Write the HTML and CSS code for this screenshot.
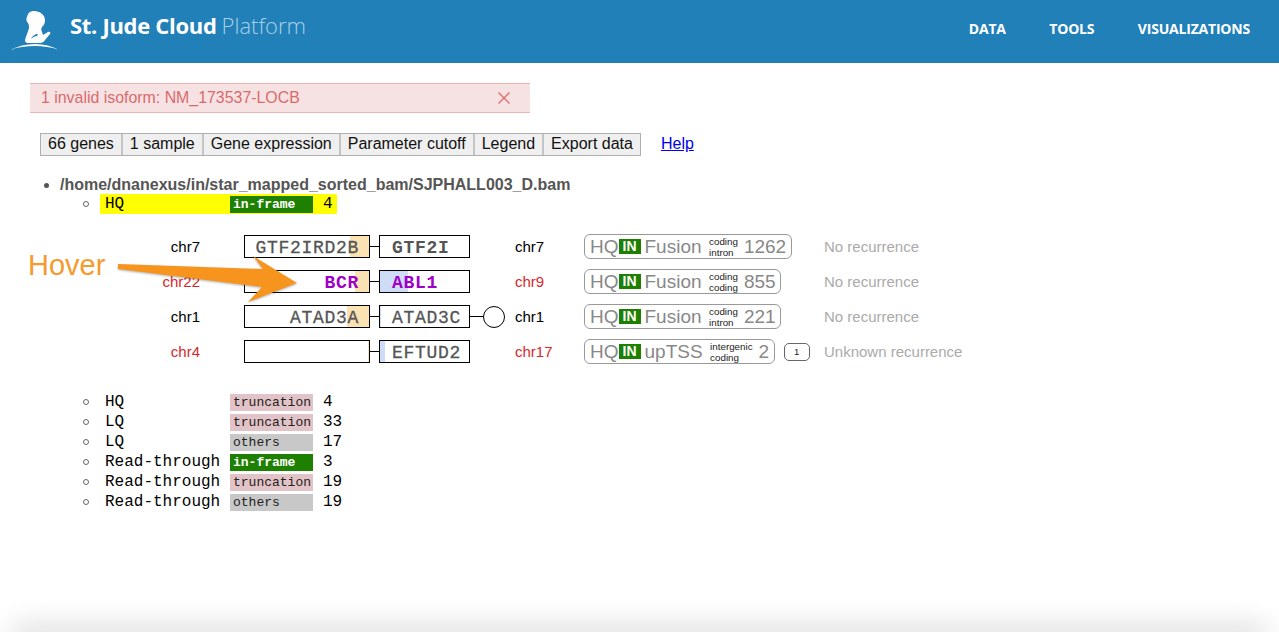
FILE: index.html
```html
<!DOCTYPE html>
<html>
<head>
<meta charset="utf-8">
<title>St. Jude Cloud Platform</title>
<link rel="stylesheet" href="styles.css">
</head>
<body>
	<header class="topbar">
		<div class="brand">
			<svg class="logo" width="60" height="50" viewBox="0 0 60 50">
				<path fill="#fff" d="M34 11c6 0 11 4 11 9 0 3-1 5-3 7-1 1-1 3 0 5l1 3 5-3c2-1 3 1 2 2l-5 6c-1 2-3 3-5 3H28c-2 0-3-1-3-3 1-4 3-8 4-12 0-2 0-3-1-5-2-2-2-4-1-6 1-4 3-6 7-6z"/>
				<path fill="#2280b9" d="M31 39c1-3 4-5 7-5l-1 2c-2 0-4 1-6 3z"/>
				<path fill="#fff" d="M10 50c8-4 16-6 25-6s17 2 24 6c-8-3-16-4-24-4-9 0-17 1-25 4z"/>
			</svg>
			<span class="brand-name">St. Jude Cloud</span>
			<span class="brand-sub">Platform</span>
		</div>
		<nav class="mainnav">
			<a>DATA</a>
			<a>TOOLS</a>
			<a>VISUALIZATIONS</a>
		</nav>
	</header>

	<main class="content">
		<div class="alert">
			<span>1 invalid isoform: NM_173537-LOCB</span>
			<svg class="alert-close" width="14" height="14" viewBox="0 0 14 14"><path d="M1.5 1.5l11 11M12.5 1.5l-11 11"/></svg>
		</div>

		<div class="toolbar">
			<div class="tools">
				<span class="tool">66 genes</span>
				<span class="tool">1 sample</span>
				<span class="tool">Gene expression</span>
				<span class="tool">Parameter cutoff</span>
				<span class="tool">Legend</span>
				<span class="tool">Export data</span>
			</div>
			<a class="help" href="#">Help</a>
		</div>

		<ul class="samples">
			<li>
				<div class="sample-name">/home/dnanexus/in/star_mapped_sorted_bam/SJPHALL003_D.bam</div>
				<ul class="groups">
					<li><div class="group group-on"><span class="g-name">HQ</span><span class="g-tag inframe">in-frame</span><span class="g-count">4</span></div></li>
				</ul>

				<div class="fusions">
					<span class="chr left">chr7</span>
					<div class="gene gene-l"><i class="utr" style="width:19px"></i><b class="sym">GTF2IRD2B</b></div>
					<span class="link"></span>
					<div class="gene gene-r"><b class="sym strong">GTF2I</b></div>
					<span></span>
					<span class="chr">chr7</span>
					<div class="tags"><div class="pill">HQ<em>IN</em><span class="p-type">Fusion</span><small>coding<br>intron</small><span class="p-num">1262</span></div></div>
					<span class="recur">No recurrence</span>

					<span class="chr left red">chr22</span>
					<div class="gene gene-l"><i class="utr" style="width:14px"></i><b class="sym strong hot">BCR</b></div>
					<span class="link"></span>
					<div class="gene gene-r"><i class="cds" style="width:28px"></i><b class="sym strong hot">ABL1</b></div>
					<span></span>
					<span class="chr red">chr9</span>
					<div class="tags"><div class="pill">HQ<em>IN</em><span class="p-type">Fusion</span><small>coding<br>coding</small><span class="p-num">855</span></div></div>
					<span class="recur">No recurrence</span>

					<span class="chr left">chr1</span>
					<div class="gene gene-l"><i class="utr" style="width:22px"></i><b class="sym">ATAD3A</b></div>
					<span class="link"></span>
					<div class="gene gene-r"><i class="cds" style="width:1px"></i><b class="sym">ATAD3C</b></div>
					<div class="tail"><span class="tail-line"></span><span class="tail-circle"></span></div>
					<span class="chr">chr1</span>
					<div class="tags"><div class="pill">HQ<em>IN</em><span class="p-type">Fusion</span><small>coding<br>intron</small><span class="p-num">221</span></div></div>
					<span class="recur">No recurrence</span>

					<span class="chr left red">chr4</span>
					<div class="gene gene-l"><i class="utr" style="width:1px"></i></div>
					<span class="link"></span>
					<div class="gene gene-r"><i class="cds" style="width:5px"></i><b class="sym">EFTUD2</b></div>
					<span></span>
					<span class="chr red">chr17</span>
					<div class="tags"><div class="pill">HQ<em>IN</em><span class="p-type">upTSS</span><small>intergenic<br>coding</small><span class="p-num">2</span></div><span class="chip">1</span></div>
					<span class="recur">Unknown recurrence</span>
				</div>

				<ul class="groups groups-rest">
					<li><div class="group"><span class="g-name">HQ</span><span class="g-tag trunc">truncation</span><span class="g-count">4</span></div></li>
					<li><div class="group"><span class="g-name">LQ</span><span class="g-tag trunc">truncation</span><span class="g-count">33</span></div></li>
					<li><div class="group"><span class="g-name">LQ</span><span class="g-tag others">others</span><span class="g-count">17</span></div></li>
					<li><div class="group"><span class="g-name">Read-through</span><span class="g-tag inframe">in-frame</span><span class="g-count">3</span></div></li>
					<li><div class="group"><span class="g-name">Read-through</span><span class="g-tag trunc">truncation</span><span class="g-count">19</span></div></li>
					<li><div class="group"><span class="g-name">Read-through</span><span class="g-tag others">others</span><span class="g-count">19</span></div></li>
				</ul>
			</li>
		</ul>
	</main>

	<!-- annotation on top of the screenshot -->
	<span class="hover-note">Hover</span>
	<svg class="hover-arrow" width="200" height="60" viewBox="0 0 200 60">
		<path d="M2 11L147 16 137 3 181 30 132 49 146 34 2 16z"/>
	</svg>
	<div class="page-shade"></div>
</body>
</html>
```

FILE: styles.css
```css
html, body{
	height: 100%;
}
body{
	margin: 0;
	background: #fff;
	font-family: "Liberation Sans", Arial, sans-serif;
	overflow: hidden;
	position: relative;
}
.topbar{
	height: 63px;
	background: #2280b9;
	display: flex;
	justify-content: space-between;
	color: #fff;
	font-family: "Open Sans", sans-serif;
}
.brand{
	display: flex;
	align-items: flex-start;
	padding-top: 10px;
	padding-left: 70px;
	position: relative;
	font-size: 22px;
	line-height: 30px;
}
.logo{
	position: absolute;
	left: 0;
	top: 0;
}
.brand-name{
	font-weight: 700;
	letter-spacing: -0.3px;
}
.brand-sub{
	color: #a5d0e8;
	font-weight: 300;
	margin-left: 5px;
}
.mainnav{
	display: flex;
	gap: 43.5px;
	padding: 19px 29px 0 0;
	font-size: 14px;
	font-weight: 700;
	line-height: 20px;
	letter-spacing: -0.2px;
}
.content{
	padding: 20px 30px 0;
}
.alert{
	width: 500px;
	height: 30px;
	box-sizing: border-box;
	display: flex;
	align-items: center;
	justify-content: space-between;
	padding: 0 19px 0 11px;
	background: #f6e2e3;
	border-top: 1px solid #efb3b0;
	border-bottom: 1px solid #efb3b0;
	color: #d96b6d;
	font-size: 15.9px;
}
.alert-close path{
	fill: none;
	stroke: #d96b6d;
	stroke-width: 1.3;
}
.toolbar{
	display: flex;
	align-items: flex-start;
	gap: 20px;
	margin: 20px 0 0 10px;
}
.tools{
	display: flex;
	height: 23px;
	border: 1px solid #b0b0b0;
	box-sizing: border-box;
}
.tool{
	padding: 0 7px;
	line-height: 19px;
	font-size: 16px;
	color: #111;
	background: #efefef;
	border-left: 2px solid #c4c4c4;
}
.tool:first-child{
	border-left: 0;
}
.help{
	font-size: 16px;
	line-height: 22px;
	color: #00e;
}
.samples{
	margin: 19px 0 0 30px;
	padding: 0;
	list-style: disc;
	color: #555;
}
.sample-name{
	font-weight: 700;
	font-size: 16px;
	line-height: 19px;
	color: #555;
}
.groups{
	margin: 0;
	padding-left: 40px;
	list-style: none;
	font-family: "Liberation Mono", "Courier New", monospace;
	font-size: 16px;
	color: #000;
}
.groups li{
	height: 20px;
	position: relative;
}
.groups li::before{
	content: "";
	position: absolute;
	left: -17px;
	top: 7px;
	width: 4px;
	height: 4px;
	border: 1px solid #666;
	border-radius: 50%;
}
.group{
	display: flex;
	align-items: center;
	height: 20px;
	padding-left: 5px;
}
.group-on{
	width: 232px;
	background: #ff0;
}
.g-name{
	width: 125px;
	flex: none;
}
.g-tag{
	width: 83px;
	height: 17px;
	line-height: 17px;
	padding-left: 3px;
	box-sizing: border-box;
	font-size: 13px;
	flex: none;
	align-self: flex-end;
	margin-bottom: 1px;
}
.inframe{
	background: #1d8000;
	color: #fff;
	font-weight: 700;
}
.trunc{
	background: #e2c3c7;
	color: #222;
}
.others{
	background: #c8c8c8;
	color: #222;
}
.g-count{
	margin-left: 10px;
}
.fusions{
	display: grid;
	grid-template-columns: 184px 126px 9px 91px 45px 69px 240px auto;
	grid-auto-rows: 35px;
	align-items: center;
	margin: 15px 0 23px;
	font-size: 15px;
	color: #000;
}
.chr{
	white-space: nowrap;
}
.chr.left{
	text-align: right;
	padding-right: 44px;
}
.red{
	color: #d5282d;
}
.gene{
	height: 23px;
	box-sizing: border-box;
	border: 1px solid #000;
	display: flex;
	align-items: center;
	position: relative;
}
.gene-l{
	justify-content: flex-end;
	padding-right: 10px;
}
.gene-r{
	padding-left: 12px;
}
.utr, .cds{
	position: absolute;
	top: 0;
	bottom: 0;
}
.utr{
	right: 0;
	background: #fbe2b3;
}
.cds{
	left: 0;
	background: #cfdcf8;
}
.sym{
	position: relative;
	padding-top: 2px;
	font-family: "Liberation Mono", "Courier New", monospace;
	font-size: 18px;
	letter-spacing: 0.7px;
	font-weight: 400;
	color: #555;
	-webkit-text-stroke: 0.3px #555;
}
.sym.strong{
	font-weight: 700;
	-webkit-text-stroke: 0;
}
.sym.hot{
	color: #a000c8;
}
.link{
	height: 1px;
	background: #000;
}
.tail{
	display: flex;
	align-items: center;
}
.tail-line{
	width: 13px;
	height: 1px;
	background: #000;
}
.tail-circle{
	width: 22px;
	height: 22px;
	border: 1px solid #000;
	border-radius: 50%;
	box-sizing: border-box;
	flex: none;
}
.tags{
	display: flex;
	align-items: center;
	gap: 9px;
}
.pill{
	height: 25px;
	box-sizing: border-box;
	border: 1px solid #999;
	border-radius: 6px;
	padding: 0 4.5px 0 5px;
	display: flex;
	align-items: center;
	font-size: 19px;
	color: #888;
}
.pill em{
	width: 22px;
	height: 15px;
	line-height: 15px;
	text-align: center;
	background: #1d8000;
	color: #fff;
	font-style: normal;
	font-weight: 700;
	font-size: 14px;
}
.p-type{
	margin-left: 4px;
}
.pill small{
	margin: 0 6px 0 7.5px;
	font-size: 9.8px;
	line-height: 11px;
	color: #222;
}
.chip{
	width: 26px;
	height: 18px;
	box-sizing: border-box;
	border: 1px solid #666;
	border-radius: 5px;
	text-align: center;
	font-size: 9.6px;
	line-height: 16px;
	color: #222;
}
.recur{
	color: #aaa;
	white-space: nowrap;
}
.hover-note{
	position: absolute;
	left: 28px;
	top: 248px;
	font-size: 29px;
	line-height: 34px;
	color: #f79a2e;
}
.hover-arrow{
	position: absolute;
	left: 116px;
	top: 253px;
	filter: drop-shadow(0 1px 1px rgba(0,0,0,0.3));
}
.hover-arrow path{
	fill: #f7941e;
}
.page-shade{
	position: absolute;
	left: 20px;
	right: 20px;
	bottom: -6px;
	height: 6px;
	box-shadow: 0 0 28px 8px rgba(0,0,0,0.14);
}
```
